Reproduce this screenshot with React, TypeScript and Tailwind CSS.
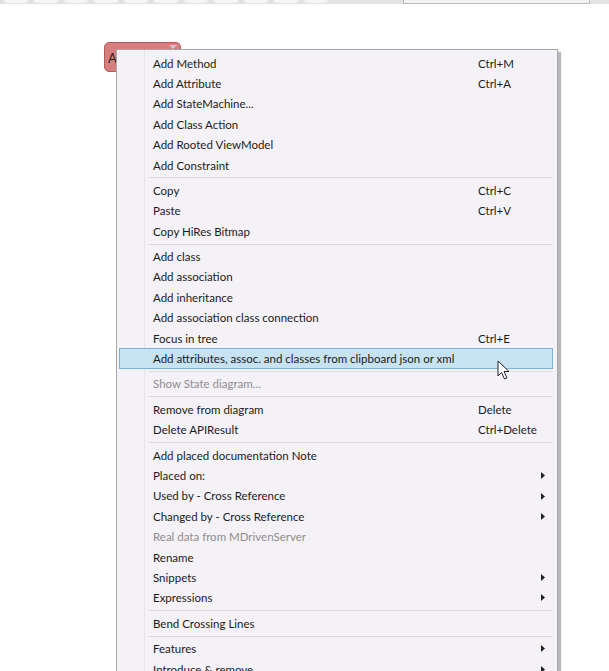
import React from 'react';

type Item =
  | { kind: 'sep' }
  | { kind: 'item'; label: string; shortcut?: string; sub?: boolean; disabled?: boolean; active?: boolean };

const it = (label: string, extra: Partial<Omit<Extract<Item, { kind: 'item' }>, 'kind' | 'label'>> = {}): Item => ({
  kind: 'item',
  label,
  ...extra,
});
const sep: Item = { kind: 'sep' };

const items: Item[] = [
  it('Add Method', { shortcut: 'Ctrl+M' }),
  it('Add Attribute', { shortcut: 'Ctrl+A' }),
  it('Add StateMachine...'),
  it('Add Class Action'),
  it('Add Rooted ViewModel'),
  it('Add Constraint'),
  sep,
  it('Copy', { shortcut: 'Ctrl+C' }),
  it('Paste', { shortcut: 'Ctrl+V' }),
  it('Copy HiRes Bitmap'),
  sep,
  it('Add class'),
  it('Add association'),
  it('Add inheritance'),
  it('Add association class connection'),
  it('Focus in tree', { shortcut: 'Ctrl+E' }),
  it('Add attributes, assoc. and classes from clipboard json or xml', { active: true }),
  sep,
  it('Show State diagram...', { disabled: true }),
  sep,
  it('Remove from diagram', { shortcut: 'Delete' }),
  it('Delete APIResult', { shortcut: 'Ctrl+Delete' }),
  sep,
  it('Add placed documentation Note'),
  it('Placed on:', { sub: true }),
  it('Used by - Cross Reference', { sub: true }),
  it('Changed by - Cross Reference', { sub: true }),
  it('Real data from MDrivenServer', { disabled: true }),
  it('Rename'),
  it('Snippets', { sub: true }),
  it('Expressions', { sub: true }),
  sep,
  it('Bend Crossing Lines'),
  sep,
  it('Features', { sub: true }),
  it('Introduce & remove', { sub: true }),
];

const SubArrow = () => (
  <svg width="4" height="7" viewBox="0 0 4 7" className="ml-auto mr-[7px] shrink-0">
    <path d="M0 0 L4 3.5 L0 7 Z" fill="#222" />
  </svg>
);

const Cursor = () => (
  <svg width="14" height="20" viewBox="0 0 14 20" className="absolute left-[497px] top-[360px]">
    <path d="M1 1 L1 16 L4.5 12.5 L7.5 19 L10 18 L7 11.5 L12 11.5 Z" fill="#fff" stroke="#222" strokeWidth="1" strokeLinejoin="round" />
  </svg>
);

export default function App() {
  return (
    <div className="relative w-[609px] h-[671px] overflow-hidden bg-white" style={{ fontFamily: 'Lato, "Noto Sans", sans-serif' }}>
      {/* top strip of the window */}
      <div className="flex h-[4px] bg-[#e3e3e3]">
        <div className="flex flex-1 gap-[6px] px-[4px]">
          {Array.from({ length: 11 }).map((_, i) => (
            <div key={i} className="h-[3px] w-[24px] rounded-b-full bg-[#f5f5f5]" />
          ))}
        </div>
        <div className="mr-[19px] h-[4px] w-[187px] border border-t-0 border-[#b9b9b9] bg-[#f4f4f4]" />
      </div>

      {/* class box on the diagram */}
      <div className="absolute left-[104px] top-[42px] h-[30px] w-[77px] rounded-[5px] border border-[#b45c5c] bg-[#d77f7f]">
        <span className="absolute left-[3px] top-[9px] text-[13px] leading-none text-[#222]">A</span>
        <div className="absolute right-[3px] top-[2px] h-0 w-0 border-x-[4px] border-t-[4px] border-x-transparent border-t-[#c9c9c9]" />
      </div>

      {/* context menu */}
      <div className="absolute left-[116px] top-[49px] w-[442px] border border-[#a7a7a7] bg-[#f4f2f6] pb-[2px] pl-[2px] pr-[4px] pt-[3px] shadow-[3px_3px_1px_rgba(0,0,0,0.28)]">
        <div className="absolute bottom-0 left-[27px] top-0 w-px bg-[#e6e4e9]" />
        {items.map((item, i) =>
          item.kind === 'sep' ? (
            <div key={i} className="flex h-[5px] items-center pl-[30px]">
              <div className="h-px w-full bg-[#dcdadf]" />
            </div>
          ) : (
            <div
              key={i}
              className={`relative flex h-[20.4px] items-center text-[11.5px] ${
                item.active ? 'border border-[#7db4d5] bg-[#c7e2f1]' : 'border border-transparent'
              } ${item.disabled ? 'text-[#8e8c90]' : 'text-[#1b1b1b]'}`}
            >
              <span className="w-[358px] shrink-0 whitespace-nowrap pl-[33px]">{item.label}</span>
              {item.shortcut && <span className="whitespace-nowrap">{item.shortcut}</span>}
              {item.sub && <SubArrow />}
            </div>
          ),
        )}
      </div>

      <Cursor />
    </div>
  );
}
